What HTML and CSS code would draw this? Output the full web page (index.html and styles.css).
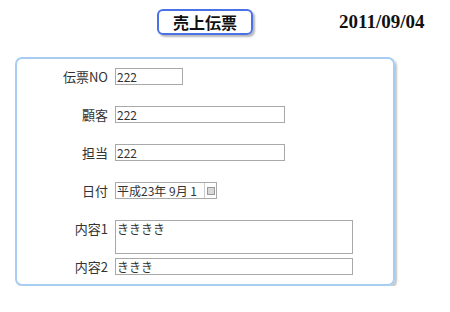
FILE: index.html
```html
<!DOCTYPE html>
<html>
<head>
    <meta charset="UTF-8">
    <title>売上伝票</title>
    <link rel="stylesheet" href="styles.css">
</head>
<body>
    <div class="header">
        <div class="title">売上伝票</div>
        <div class="date">2011/09/04</div>
    </div>

    <div class="panel">
        <div class="row">
            <label class="label">伝票NO</label>
            <input class="field short" type="text" value="222">
        </div>
        <div class="row">
            <label class="label">顧客</label>
            <input class="field wide" type="text" value="222">
        </div>
        <div class="row">
            <label class="label">担当</label>
            <input class="field wide" type="text" value="222">
        </div>
        <div class="row">
            <label class="label">日付</label>
            <div class="datebox">
                <span class="datetext">平成23年 9月 1</span>
                <span class="pick"><span class="pickIcon"></span></span>
            </div>
        </div>
        <div class="row tight">
            <label class="label">内容1</label>
            <textarea class="field area">きききき</textarea>
        </div>
        <div class="row">
            <label class="label">内容2</label>
            <input class="field full" type="text" value="ききき">
        </div>
    </div>
</body>
</html>
```

FILE: styles.css
```css
body {
    margin: 0;
    background: #ffffff;
    font-family: "Noto Sans CJK JP", "Liberation Sans", sans-serif;
    font-size: 12px;
    color: #222222;
}
.header {
    display: flex;
    align-items: flex-start;
    height: 57px;
    padding-left: 157px;
}
.title {
    margin-top: 9px;
    width: 92px;
    height: 22px;
    border: 2px solid #4a72e6;
    border-radius: 6px;
    box-shadow: 2px 2px 2px #b8b8b8;
    text-align: center;
    font-size: 16px;
    font-weight: bold;
    line-height: 22px;
    color: #111111;
}
.date {
    margin-left: 86px;
    margin-top: 11px;
    font-family: "Liberation Serif", serif;
    font-size: 19px;
    font-weight: bold;
    color: #111111;
}
.panel {
    margin-left: 15px;
    width: 376px;
    height: 216px;
    border: 2px solid #a8cdf2;
    border-radius: 7px;
    box-shadow: 2px 2px 2px #c4c4c4;
    padding-top: 9px;
}
.row {
    display: flex;
    align-items: flex-start;
    margin-bottom: 21px;
}
.row.tight {
    margin-bottom: 4px;
}
.label {
    width: 91px;
    margin-right: 7px;
    text-align: right;
    font-size: 13px;
    line-height: 17px;
    color: #333333;
}
.field {
    box-sizing: border-box;
    height: 17px;
    margin: 0;
    padding: 0 1px;
    border: 1px solid #a9a9a9;
    font-family: "Noto Sans CJK JP", "Liberation Sans", sans-serif;
    font-size: 12px;
    line-height: 15px;
    color: #333333;
    background: #ffffff;
}
.short {
    width: 68px;
}
.wide {
    width: 170px;
}
.full {
    width: 238px;
}
.area {
    width: 238px;
    height: 34px;
    resize: none;
    overflow: hidden;
}
.datebox {
    display: flex;
    box-sizing: border-box;
    width: 102px;
    height: 17px;
    border: 1px solid #a9a9a9;
}
.datetext {
    flex: 1;
    padding-left: 1px;
    line-height: 15px;
    color: #333333;
    white-space: nowrap;
}
.pick {
    display: flex;
    align-items: center;
    justify-content: center;
    width: 11px;
    border-left: 1px solid #cccccc;
}
.pickIcon {
    width: 6px;
    height: 6px;
    border: 1px solid #9a9a9a;
    background: #d8d8d8;
}
```
